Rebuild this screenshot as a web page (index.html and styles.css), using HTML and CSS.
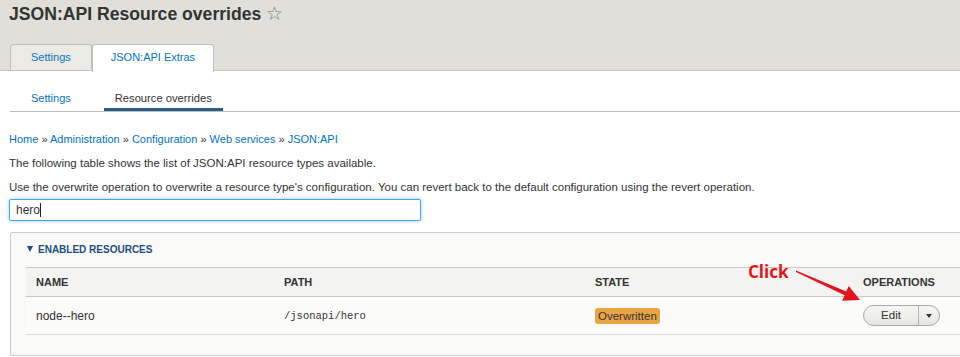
FILE: index.html
```html
<!DOCTYPE html>
<html lang="en">
<head>
    <meta charset="UTF-8">
    <title>JSON:API Resource overrides</title>
    <link rel="stylesheet" href="styles.css">
</head>
<body>
    <div class="page-header">
        <h1 class="page-title">JSON:API Resource overrides <span class="star">☆</span></h1>
        <ul class="tabs primary">
            <li><a href="#">Settings</a></li>
            <li class="active"><a href="#">JSON:API Extras</a></li>
        </ul>
    </div>

    <ul class="tabs secondary">
        <li><a href="#">Settings</a></li>
        <li class="active"><a href="#">Resource overrides</a></li>
    </ul>

    <div class="content">
        <div class="breadcrumb">
            <a href="#">Home</a> » <a href="#">Administration</a> » <a href="#">Configuration</a> » <a href="#">Web services</a> » <a href="#">JSON:API</a>
        </div>
        <p class="intro">The following table shows the list of JSON:API resource types available.</p>
        <p class="intro">Use the overwrite operation to overwrite a resource type's configuration. You can revert back to the default configuration using the revert operation.</p>

        <div class="search-field">hero<span class="caret"></span></div>

        <details class="resources" open>
            <summary><span class="arrow"></span>Enabled resources</summary>
            <table class="resource-table">
                <colgroup>
                    <col class="col-name">
                    <col class="col-path">
                    <col class="col-state">
                    <col class="col-ops">
                </colgroup>
                <thead>
                    <tr>
                        <th>Name</th>
                        <th>Path</th>
                        <th>State</th>
                        <th>Operations</th>
                    </tr>
                </thead>
                <tbody>
                    <tr>
                        <td>node--hero</td>
                        <td class="path">/jsonapi/hero</td>
                        <td><span class="badge">Overwritten</span></td>
                        <td>
                            <div class="dropbutton">
                                <a href="#" class="dropbutton-main">Edit</a>
                                <span class="dropbutton-toggle"></span>
                            </div>
                        </td>
                    </tr>
                </tbody>
            </table>
        </details>
    </div>

    <!-- screenshot annotation -->
    <div class="annotation">
        <span class="click-label">Click</span>
        <svg class="click-arrow" width="130" height="50" viewBox="0 0 130 50">
            <polygon points="56,10.5 106.2,31.6 108.7,26.1 120,40 102.1,40.7 104.6,35.2 56,12" fill="#e3141b"/>
        </svg>
    </div>
</body>
</html>
```

FILE: styles.css
```css
html, body {
    overflow: hidden;
}
body {
    margin: 0;
    font-family: "Liberation Sans", Arial, sans-serif;
    font-size: 11px;
    color: #333;
    background: #fff;
    position: relative;
}
a {
    color: #0074bd;
    text-decoration: none;
}
.page-header {
    background: #e0dfd9;
    border-bottom: 1px solid #c5c4bd;
    height: 70px;
}
.page-title {
    margin: 0;
    padding: 2px 0 0 9px;
    font-size: 17.6px;
    line-height: 24px;
    font-weight: bold;
    color: #333;
}
.star {
    font-weight: normal;
    color: #777;
    font-size: 19px;
}
.tabs {
    list-style: none;
    margin: 0;
    padding: 0;
    display: flex;
}
.tabs.primary {
    margin: 18px 0 0 10px;
}
.tabs.primary li {
    height: 25px;
    line-height: 25px;
    padding: 0 20px;
    background: #ebeae5;
    border: 1px solid #bfbfba;
    border-bottom: none;
    border-radius: 3px 3px 0 0;
}
.tabs.primary li.active {
    background: #fff;
    height: 27px;
    margin-bottom: -1px;
    padding: 0 18px;
}
.tabs.secondary {
    margin: 0 0 0 10px;
    padding: 17px 0 0 10px;
    gap: 22px;
    border-bottom: 1px solid #bfbfba;
}
.tabs.secondary li {
    padding: 0 11px;
    line-height: 20px;
    border-bottom: 3px solid transparent;
}
.tabs.secondary li.active {
    border-bottom-color: #2d5c8a;
}
.tabs.secondary li.active a {
    color: #333;
    font-size: 11.2px;
}
.content {
    padding: 0 0 0 9px;
}
.breadcrumb {
    margin-top: 19px;
    line-height: 16px;
}
.intro {
    margin: 8px 0 0;
    line-height: 16px;
    font-size: 11.5px;
}
.search-field {
    margin-top: 4px;
    width: 398px;
    height: 20px;
    line-height: 20px;
    padding: 0 6px;
    border: 1px solid #4aa3ea;
    border-radius: 2px;
    box-shadow: 0 0 3px 1px rgba(80, 160, 240, 0.35);
    font-size: 12px;
}
.caret {
    display: inline-block;
    width: 1px;
    height: 14px;
    background: #222;
    vertical-align: -3px;
}
.resources {
    margin: 11px -40px 0 1px;
    border: 1px solid #ccc;
    border-radius: 2px;
    background: #f9f9f8;
    padding: 9px 0 20px 15px;
}
.resources summary {
    list-style: none;
    line-height: 16px;
    font-size: 10px;
    font-weight: bold;
    text-transform: uppercase;
    color: #1f4f7e;
    cursor: pointer;
}
.resources summary::-webkit-details-marker {
    display: none;
}
.arrow {
    display: inline-block;
    width: 0;
    height: 0;
    border-left: 3.5px solid transparent;
    border-right: 3.5px solid transparent;
    border-top: 6px solid #1f4f7e;
    margin: 0 5px 1px 1px;
}
.resource-table {
    margin-top: 9px;
    border-collapse: collapse;
    table-layout: fixed;
    width: 960px;
}
.col-name { width: 248px; }
.col-path { width: 311px; }
.col-state { width: 268px; }
.resource-table th {
    text-align: left;
    font-weight: bold;
    text-transform: uppercase;
    font-size: 11px;
    height: 28px;
    padding: 0 10px;
    background: #f3f3f1;
    border-top: 1px solid #c8c8c4;
    border-bottom: 1px solid #c8c8c4;
}
.resource-table td {
    height: 37px;
    padding: 0 10px;
    border-bottom: 1px solid #ddd;
    background: #fbfbfa;
    font-size: 12px;
}
.resource-table td.path {
    font-family: "Liberation Mono", monospace;
    font-size: 10.5px;
}
.badge {
    display: inline-block;
    background: #e9a443;
    color: #333;
    font-size: 11.5px;
    line-height: 16px;
    padding: 0 3px;
    border-radius: 3px;
}
.dropbutton {
    display: inline-flex;
    height: 19px;
    border: 1px solid #a8a8a4;
    border-radius: 11px;
    background: linear-gradient(#f6f6f3, #e6e6e1);
    overflow: hidden;
}
.dropbutton-main {
    width: 54px;
    text-align: center;
    line-height: 19px;
    color: #333;
    font-size: 11.5px;
    border-right: 1px solid #b5b5b0;
}
.dropbutton-toggle {
    width: 20px;
    display: flex;
    align-items: center;
    justify-content: center;
}
.dropbutton-toggle::after {
    content: "";
    border-left: 3.5px solid transparent;
    border-right: 3.5px solid transparent;
    border-top: 4px solid #333;
}
.annotation {
    position: absolute;
    left: 740px;
    top: 260px;
    width: 130px;
    height: 50px;
}
.click-label {
    position: absolute;
    left: 8px;
    top: 2px;
    font-family: "Open Sans", sans-serif;
    font-weight: bold;
    font-size: 17px;
    line-height: 20px;
    color: #e3141b;
    text-shadow: 0 0 2px #fff;
}
.click-arrow {
    position: absolute;
    left: 0;
    top: 0;
}
```
